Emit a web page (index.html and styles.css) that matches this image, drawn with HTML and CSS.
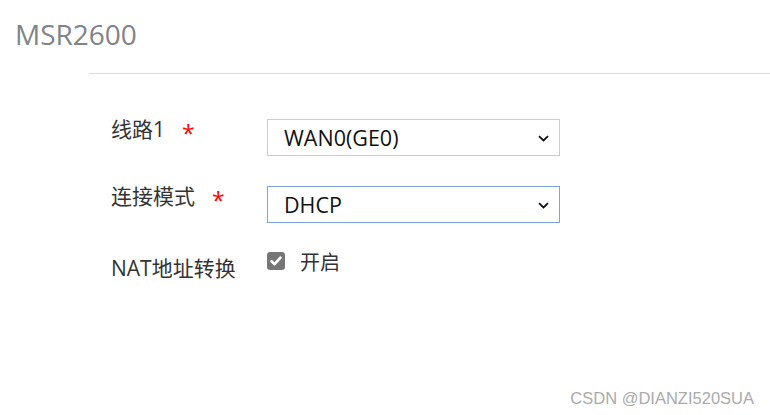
FILE: index.html
```html
<!DOCTYPE html>
<html lang="zh-CN">
<head>
<meta charset="utf-8">
<title>MSR2600</title>
<link rel="stylesheet" href="styles.css">
</head>
<body>
<div class="page">
  <header class="head">
    <h1 class="title">MSR2600</h1>
  </header>
  <div class="rule"></div>
  <form class="form">
    <div class="row">
      <label class="label">线路1<span class="req">*</span></label>
      <div class="select">
        <span class="value">WAN0(GE0)</span>
        <svg class="chev" width="11" height="7" viewBox="0 0 11 7"><path d="M1 1.2 L5.5 5.5 L10 1.2" fill="none" stroke="#111" stroke-width="1.8"/></svg>
      </div>
    </div>
    <div class="row">
      <label class="label">连接模式<span class="req">*</span></label>
      <div class="select focus">
        <span class="value">DHCP</span>
        <svg class="chev" width="11" height="7" viewBox="0 0 11 7"><path d="M1 1.2 L5.5 5.5 L10 1.2" fill="none" stroke="#111" stroke-width="1.8"/></svg>
      </div>
    </div>
    <div class="row row-check">
      <label class="label">NAT地址转换</label>
      <div class="check">
        <span class="box"><svg width="18" height="18" viewBox="0 0 18 18"><path d="M4.5 9.2 L7.6 12.2 L13.5 5.6" fill="none" stroke="#fff" stroke-width="2.6" stroke-linecap="round" stroke-linejoin="round"/></svg></span>
        <span class="check-text">开启</span>
      </div>
    </div>
  </form>
  <div class="mark">CSDN @DIANZI520SUA</div>
</div>
</body>
</html>
```
FILE: styles.css
```css
html, body {
  margin: 0;
  padding: 0;
  background: #fff;
}
.page {
  width: 770px;
  height: 415px;
  position: relative;
  font-family: "Open Sans", "Noto Sans CJK SC", sans-serif;
  color: #333;
}
.head {
  padding: 15px 0 0 15px;
  height: 57px;
  box-sizing: border-box;
}
.title {
  margin: 0;
  font-weight: 400;
  font-size: 28px;
  line-height: 38px;
  color: #808489;
}
.rule {
  margin-left: 89px;
  border-top: 1px solid #dcdcdc;
  margin-top: 16px;
}
.form {
  padding: 45px 0 0 111px;
  display: flex;
  flex-direction: column;
  gap: 30px;
}
.row {
  display: flex;
  align-items: center;
  height: 37px;
}
.row-check {
  margin-top: -4px;
  height: 30px;
}
.label {
  width: 156px;
  flex: none;
  font-size: 21px;
  line-height: 28px;
  color: #333;
  margin-top: -14px;
}
.row-check .label {
  margin-top: 8px;
}
.req {
  color: #f00;
  margin-left: 17px;
  font-size: 23px;
  vertical-align: -5px;
}
.select {
  width: 293px;
  height: 37px;
  box-sizing: border-box;
  border: 1px solid #cccccc;
  display: flex;
  align-items: center;
  justify-content: space-between;
  padding: 0 10px 0 16px;
}
.select.focus {
  border-color: #79a6d6;
}
.value {
  font-size: 21.5px;
  color: #111;
}
.chev {
  display: block;
  margin-top: 1px;
}
.check {
  display: flex;
  align-items: center;
}
.box {
  width: 18px;
  height: 18px;
  border-radius: 3px;
  background: #767676;
  display: block;
  margin-top: -6px;
}
.box svg { display: block; }
.check-text {
  margin-left: 15px;
  font-size: 20px;
  margin-top: -6px;
}
.mark {
  position: absolute;
  right: 16px;
  bottom: 7px;
  font-family: "Liberation Sans", Arial, sans-serif;
  font-size: 16.5px;
  color: #ababab;
}
```
